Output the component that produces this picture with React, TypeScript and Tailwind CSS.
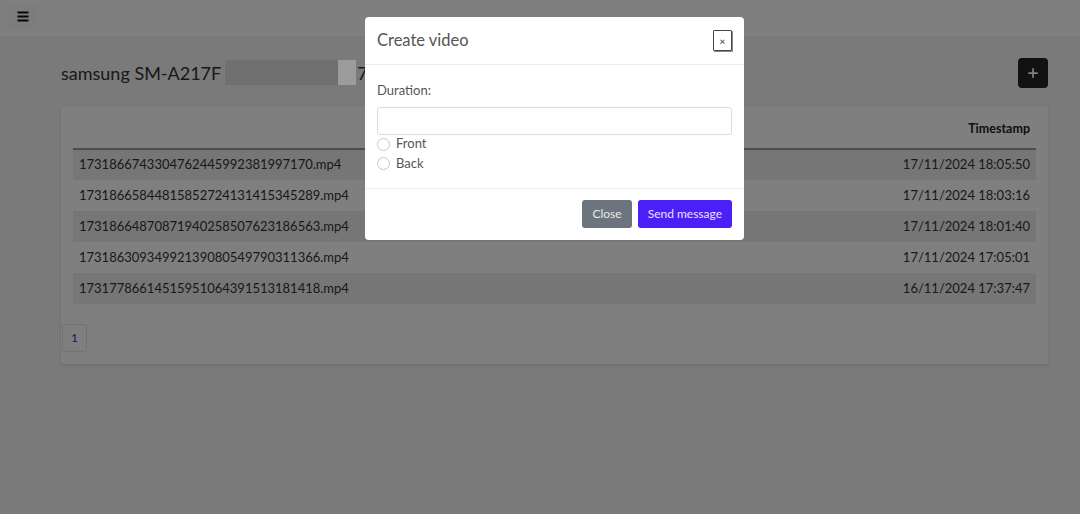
import { Plus } from "lucide-react";

const rows = [
  { file: "1731866743304762445992381997170.mp4", ts: "17/11/2024 18:05:50" },
  { file: "17318665844815852724131415345289.mp4", ts: "17/11/2024 18:03:16" },
  { file: "17318664870871940258507623186563.mp4", ts: "17/11/2024 18:01:40" },
  { file: "17318630934992139080549790311366.mp4", ts: "17/11/2024 17:05:01" },
  { file: "17317786614515951064391513181418.mp4", ts: "16/11/2024 17:37:47" },
];

export default function App() {
  return (
    <div className="relative w-full h-[514px] overflow-hidden bg-[#f4f4f4] text-[#333] font-['Lato','Liberation_Sans',sans-serif]">
      {/* Top bar */}
      <header className="h-[37px] bg-white border-b border-[#ececec] flex items-start pl-[8px] pt-[3px]">
        <button className="w-[30px] h-[27px] bg-[#fbfbfb] rounded-[3px] flex items-center justify-center">
          <svg width="12" height="11" viewBox="0 0 12 11">
            <rect x="0.5" y="0.5" width="11" height="2" fill="#111" />
            <rect x="0.5" y="4.5" width="11" height="2" fill="#111" />
            <rect x="0.5" y="8.5" width="11" height="2" fill="#111" />
          </svg>
        </button>
      </header>

      {/* Page */}
      <main className="pl-[61px] pr-[32px]">
        <div className="h-[69px] flex items-center justify-between pt-[2px]">
          <h1 className="flex items-center text-[18px] text-[#333] leading-none">
            <span>samsung SM-A217F</span>
            <span className="relative z-[60] ml-[4px] inline-block w-[113px] h-[25px] bg-[#707070]" />
            <span className="relative z-[60] inline-block w-[18px] h-[25px] bg-[#9c9c9c]" />
            <span className="ml-[1px]">7</span>
          </h1>
          <button className="w-[30px] h-[30px] rounded-[4px] bg-[#222] flex items-center justify-center">
            <Plus className="w-[14px] h-[14px] text-white" strokeWidth={3} />
          </button>
        </div>

        <section className="bg-white rounded-[2px] shadow-[0_1px_3px_rgba(0,0,0,0.12)] px-[12px] pt-[12px] pb-[12px]">
          <table className="w-full text-[13px] border-collapse">
            <thead>
              <tr className="border-b-2 border-[#9a9a9a]">
                <th className="h-[31px] align-bottom pb-[9px] px-[6px] text-left font-bold"></th>
                <th className="h-[31px] align-bottom pb-[9px] px-[6px] text-right text-[12.5px] font-bold text-[#222]">Timestamp</th>
              </tr>
            </thead>
            <tbody>
              {rows.map((r, i) => (
                <tr key={r.file} className={i % 2 === 0 ? "bg-[#ededed]" : "bg-white"}>
                  <td className="h-[31px] px-[6px] align-middle">{r.file}</td>
                  <td className="h-[31px] px-[6px] align-middle text-right">{r.ts}</td>
                </tr>
              ))}
            </tbody>
          </table>
          <div className="mt-[20px] -ml-[11px]">
            <span className="inline-flex w-[25px] h-[28px] items-center justify-center border border-[#e6e6e6] rounded-[2px] text-[12px] text-[#3a2bd0]">
              1
            </span>
          </div>
        </section>
      </main>

      {/* Modal overlay */}
      <div className="absolute inset-0 z-50 bg-black/50">
        <div className="absolute left-[365px] top-[17px] w-[379px] bg-white rounded-[4px] text-[#555]">
          <div className="h-[48px] flex items-center justify-between px-[12px] border-b border-[#ececec]">
            <h2 className="text-[16.5px] text-[#555]">Create video</h2>
            <button className="w-[19px] h-[21px] border border-[#444] rounded-[1px] flex items-center justify-center text-[10px] leading-none text-[#333] shadow-[1px_1px_0_#888]">
              ×
            </button>
          </div>
          <div className="px-[12px] pt-[17px] pb-[15px] text-[13px]">
            <label className="block leading-[16px]">Duration:</label>
            <input className="mt-[9px] block w-full h-[28px] border border-[#dcdcdc] rounded-[3px] outline-none" />
            <div className="flex items-center gap-[6px] h-[18px]">
              <span className="w-[13px] h-[13px] rounded-full border border-[#c8c8c8]" />
              <span>Front</span>
            </div>
            <div className="mt-[1px] flex items-center gap-[6px] h-[19px]">
              <span className="w-[13px] h-[13px] rounded-full border border-[#c8c8c8]" />
              <span>Back</span>
            </div>
          </div>
          <div className="border-t border-[#ececec] flex justify-end gap-[6px] px-[12px] pt-[11px] pb-[12px]">
            <button className="h-[28px] px-[10px] rounded-[3px] bg-[#6c757d] text-[12px] text-[#e8e8e8]">Close</button>
            <button className="h-[28px] px-[10px] rounded-[3px] bg-[#4c1ef8] text-[12px] text-[#e8e4ff]">Send message</button>
          </div>
        </div>
      </div>
    </div>
  );
}
